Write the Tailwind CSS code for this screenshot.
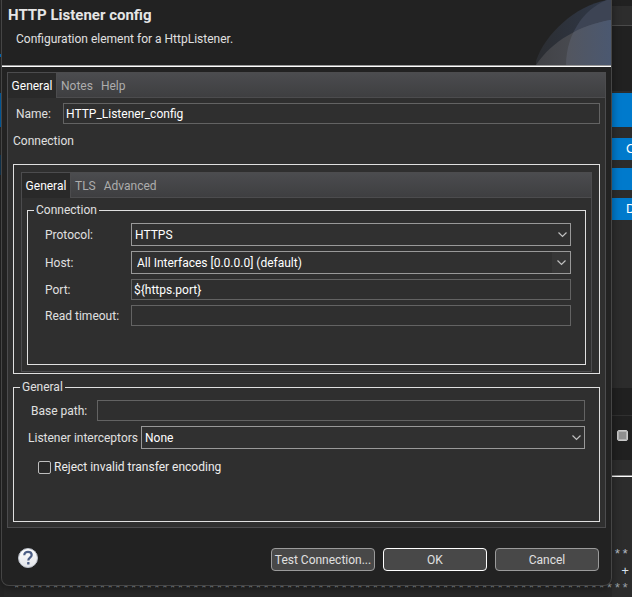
<!DOCTYPE html>
<html lang="en">
<head>
<meta charset="utf-8">
<title>HTTP Listener config</title>
<script src="https://cdn.jsdelivr.net/npm/@tailwindcss/browser@4"></script>
</head>
<body class="relative min-h-screen overflow-hidden bg-[#272727] font-[Roboto,sans-serif] text-xs leading-4 text-[#e0e0e0]">

<!-- Editor window behind the dialog -->
<div aria-hidden="true" class="absolute inset-0 overflow-hidden">
  <div class="absolute inset-y-0 left-0 flex w-1 flex-col">
    <div class="h-[54px] bg-[#2a2a2a]"></div>
    <div class="h-[3px] bg-[#0078d0]"></div>
    <div class="h-9 bg-[#2a2a2a]"></div>
    <div class="h-[34px] bg-[#0067b4]"></div>
    <div class="h-7 bg-[#2a2a2a]"></div>
    <div class="h-5 bg-[#123a58]"></div>
    <div class="flex-1 bg-[#252525]"></div>
  </div>
  <div class="absolute inset-y-0 right-0 flex w-5 flex-col bg-[#2c2c2c] font-['Liberation_Sans',sans-serif] text-[13px] text-white">
    <div class="h-1.5 bg-[#212121]"></div>
    <div class="h-5 border-b border-[#4a4a4a] bg-[#2d2d2d]"></div>
    <div class="h-[65px] bg-[#212121]"></div>
    <div class="mt-0.5 h-[34px] bg-[#007acc]"></div>
    <div class="mt-[11px] h-[22px] overflow-hidden bg-[#007acc] pl-3.5 leading-[22px]">C</div>
    <div class="mt-2 h-[22px] bg-[#007acc]"></div>
    <div class="mt-2 h-[22px] overflow-hidden bg-[#007acc] pl-3.5 leading-[22px]">D</div>
    <div class="mt-[168px] h-7 border-b border-[#303030] bg-[#202020]"></div>
    <div class="h-11 bg-[#202020] pt-3.5 pl-[5px]">
      <div class="size-[11px] rounded-xs border border-[#c9c9c9] bg-[#8f8f8f] inset-ring inset-ring-[#b4b4b4]"></div>
    </div>
    <div class="mt-[15px] h-0.5 border-b border-white bg-[#8a8a8a]"></div>
  </div>
  <div class="absolute inset-x-0 bottom-0 h-[51px] overflow-hidden pr-[3px] text-right font-['Liberation_Mono',monospace] text-[13px] leading-[17px] whitespace-nowrap text-[#b4bcc4]">
    <div>**</div>
    <div class="text-[#d8e4ee]">- +</div>
    <div class="flex justify-end text-[#98a0a6]">*******************************************************************************</div>
  </div>
</div>

<main role="dialog" aria-labelledby="title" class="relative mr-5 ml-px rounded-b-lg border border-t-0 border-[#454545] bg-[#222222] shadow-[0_2px_8px_rgba(0,0,0,0.4)]">
  <header class="relative h-[67px] border-b border-white pt-1.5">
    <h1 id="title" class="pl-1.5 text-[15px] leading-[18px] font-bold text-[#e6e6e6]">HTTP Listener config</h1>
    <p class="mt-[7px] pl-3.5">Configuration element for a HttpListener.</p>
    <svg class="absolute right-0 bottom-px" width="75" height="65" viewBox="0 0 75 65" aria-hidden="true">
      <defs>
        <linearGradient id="lens" x1="0" x2="1"><stop offset="0" stop-color="#414246"/><stop offset=".5" stop-color="#484a50"/><stop offset="1" stop-color="#4c5870"/></linearGradient>
        <linearGradient id="arc" x1="0" x2="1"><stop offset="0" stop-color="#2b2d31"/><stop offset="1" stop-color="#30394a"/></linearGradient>
        <linearGradient id="both" gradientUnits="userSpaceOnUse" x1="30" x2="75" y1="0" y2="0"><stop offset="0" stop-color="#53565f"/><stop offset="1" stop-color="#4b5870"/></linearGradient>
        <clipPath id="low"><path d="M0 65C16 41 44 25 75 20V65Z"/></clipPath>
      </defs>
      <path d="M0 65V61C9 34 39 6 71 0H75V65Z" fill="url(#arc)"/>
      <path d="M30 65C30 38 45 10 71 0H75V65Z" fill="#3d4454"/>
      <path d="M0 65C16 41 44 25 75 20V65Z" fill="url(#lens)"/>
      <path d="M30 65C30 38 45 10 71 0H75V65Z" fill="url(#both)" clip-path="url(#low)"/>
    </svg>
    <div class="absolute inset-x-0 bottom-0 h-px bg-[#999999]"></div>
  </header>

  <section class="mx-[5px] mt-[5px] border border-[#4c4c4e] bg-[#2f2f2f]">
    <div role="tablist" class="flex h-[25px] bg-linear-to-b from-[#4b4c4f] to-[#3e3e40]">
      <button role="tab" aria-selected="true" class="w-[49px] border-r border-[#4c4c4e] bg-[#292929] text-white">General</button>
      <div class="flex flex-1 gap-2 border-b border-[#4c4c4e] pt-px pl-1 text-[#adadad]">
        <button role="tab">Notes</button>
        <button role="tab">Help</button>
      </div>
    </div>

    <div class="p-[5px]">
      <div class="flex items-center">
        <label for="name" class="w-[50px] pl-[3px]">Name:</label>
        <input id="name" value="HTTP_Listener_config" class="h-[21px] min-w-0 flex-1 border border-[#636363] bg-[#2f2f2f] px-0.5 text-white">
      </div>
      <h2 class="mt-[9px]">Connection</h2>

      <div class="mt-[15px] border border-[#e0e0e0] px-[7px] pt-[7px] pb-px">
        <div class="border border-[#4c4c4e]">
          <div role="tablist" class="flex h-[25px] bg-linear-to-b from-[#4b4c4f] to-[#3e3e40]">
            <button role="tab" aria-selected="true" class="w-[49px] border-r border-[#4c4c4e] bg-[#292929] text-white">General</button>
            <div class="flex flex-1 gap-2 border-b border-[#4c4c4e] pt-px pl-1 text-[#adadad]">
              <button role="tab">TLS</button>
              <button role="tab">Advanced</button>
            </div>
          </div>
          <div class="px-[5px] pt-1 pb-1.5">
            <fieldset class="border border-[#e0e0e0] pr-3.5 pb-[38px] pl-[17px]">
              <legend class="-ml-[11px] px-0.5">Connection</legend>
              <div class="grid grid-cols-[86px_1fr] items-center gap-y-[5px] pt-[5px]">
                <label for="protocol">Protocol:</label>
                <div class="relative">
                  <select id="protocol" class="block h-[23px] w-full appearance-none border border-[#999999] bg-[#303030] px-[3px] text-white"><option>HTTPS</option><option>HTTP</option></select>
                  <svg class="pointer-events-none absolute top-[9px] right-1" width="9" height="6" viewBox="0 0 9 6" fill="none" stroke="#c0c0c0" stroke-width="1.2"><path d="M.5.5l4 4 4-4"/></svg>
                </div>
                <label for="host">Host:</label>
                <div class="relative">
                  <select id="host" class="block h-[23px] w-full appearance-none border border-[#999999] bg-[#303030] px-[5px] text-white"><option>All Interfaces [0.0.0.0] (default)</option></select>
                  <div class="pointer-events-none absolute inset-y-px right-px flex w-[18px] items-center justify-center bg-[#363636]">
                    <svg width="9" height="6" viewBox="0 0 9 6" fill="none" stroke="#c0c0c0" stroke-width="1.2"><path d="M.5.5l4 4 4-4"/></svg>
                  </div>
                </div>
                <label for="port">Port:</label>
                <input id="port" value="${https.port}" class="h-[21px] w-full border border-[#636363] bg-[#2f2f2f] px-0.5 text-white">
                <label for="timeout">Read timeout:</label>
                <input id="timeout" class="h-[21px] w-full border border-[#636363] bg-[#2f2f2f] px-0.5 text-white">
              </div>
            </fieldset>
          </div>
        </div>
      </div>

      <fieldset class="mt-[5px] border border-[#e0e0e0] pr-3.5 pb-[46px] pl-3.5">
        <legend class="-ml-2 px-0.5">General</legend>
        <div class="flex items-center pt-[5px]">
          <label for="base" class="w-[69px] pl-[3px]">Base path:</label>
          <input id="base" class="h-[21px] min-w-0 flex-1 border border-[#636363] bg-[#2f2f2f] px-0.5 text-white">
        </div>
        <div class="mt-[5px] flex items-center">
          <label for="interceptors" class="w-[113px] whitespace-nowrap">Listener interceptors</label>
          <div class="relative flex-1">
            <select id="interceptors" class="block h-[23px] w-full appearance-none border border-[#999999] bg-[#303030] px-[3px] text-white"><option>None</option></select>
            <svg class="pointer-events-none absolute top-[9px] right-1" width="9" height="6" viewBox="0 0 9 6" fill="none" stroke="#c0c0c0" stroke-width="1.2"><path d="M.5.5l4 4 4-4"/></svg>
          </div>
        </div>
        <label class="mt-2.5 ml-2.5 flex items-center gap-[3px] text-[#ececec]">
          <input type="checkbox" class="size-[13px] appearance-none rounded-xs border border-[#bdbdbd] bg-[#282828] checked:bg-[#9a9a9a]">
          Reject invalid transfer encoding
        </label>
      </fieldset>
    </div>
  </section>

  <footer class="flex items-start gap-2 pt-5 pr-3 pb-3.5 pl-4">
    <button aria-label="Help" class="mr-auto">
      <svg width="20" height="20" viewBox="0 0 20 20">
        <defs><linearGradient id="ball" x1="0" y1="0" x2="0" y2="1"><stop offset="0" stop-color="#ffffff"/><stop offset="1" stop-color="#e2e4e8"/></linearGradient></defs>
        <circle cx="10" cy="10" r="9.5" fill="url(#ball)" stroke="#b9bec8"/>
        <path d="M6.3 7.3C6.3 4.9 7.9 3.8 10 3.8S13.7 5 13.7 7c0 2.6-3.4 2.8-3.4 5.4" fill="none" stroke="#4d5f86" stroke-width="2.2"/>
        <rect x="9.1" y="14.1" width="2.4" height="2.4" rx=".5" fill="#4d5f86"/>
      </svg>
    </button>
    <button class="h-[23px] w-[104px] rounded-sm border border-[#9b9b9b] bg-[#484848] whitespace-nowrap">Test Connection...</button>
    <button class="h-[23px] w-[104px] rounded-sm border border-white bg-[#484848]">OK</button>
    <button class="h-[23px] w-[104px] rounded-sm border border-[#9b9b9b] bg-[#484848]">Cancel</button>
  </footer>
</main>
</body>
</html>
